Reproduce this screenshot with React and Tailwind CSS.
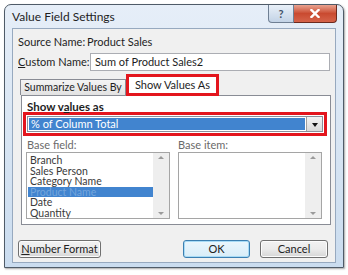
import React from "react"

const font = { fontFamily: "Lato, 'Liberation Sans', sans-serif" }

function ScrollBar() {
  return (
    <div className="flex h-full w-[16px] flex-col items-center justify-between bg-[#eeeeee] py-[3px]">
      <span className="h-0 w-0 border-x-[3px] border-b-[3px] border-x-transparent border-b-[#9a9a9a]" />
      <span className="h-0 w-0 border-x-[3px] border-t-[3px] border-x-transparent border-t-[#9a9a9a]" />
    </div>
  )
}

function ListBox({ items, selected }) {
  return (
    <div className="flex h-[67px] w-[144px] border border-[#a5a5a5] bg-white">
      <div className="flex-1 pl-[1px] pt-[2px]">
        {items.map((item) => (
          <div
            key={item}
            className={`h-[10.5px] whitespace-nowrap pl-[2px] text-[10.5px] leading-[10.5px] ${
              item === selected ? "bg-[#4184cf] text-[#75a6dc]" : "text-[#3a3a3a]"
            }`}
          >
            {item}
          </div>
        ))}
      </div>
      <ScrollBar />
    </div>
  )
}

function Button({ children, isDefault, className = "" }) {
  return (
    <div
      className={`flex h-[18px] items-center justify-center whitespace-nowrap rounded-[3px] border text-[11px] text-[#222] ${
        isDefault
          ? "border-[#3c7fb1] bg-gradient-to-b from-[#eaf6fd] to-[#d9edf8] shadow-[inset_0_0_0_1px_#a8dbf6]"
          : "border-[#707070] bg-gradient-to-b from-[#f2f2f2] via-[#ebebeb] to-[#d6d6d6] shadow-[inset_0_0_0_1px_#fcfcfc]"
      } ${className}`}
    >
      {children}
    </div>
  )
}

export default function App() {
  return (
    <div className="h-[275px] w-[348px] overflow-hidden bg-white pt-[4px] pl-[4px]" style={font}>
      <div className="h-[264px] w-[340px] rounded-t-[7px] border border-[#4f5b68] bg-gradient-to-b from-[#e6eef8] via-[#d8e5f3] to-[#cadcef] shadow-[1px_1px_2px_rgba(0,0,0,0.35)]">
        {/* title bar */}
        <div className="flex h-[23px] items-start justify-between">
          <div className="whitespace-nowrap pl-[7px] pt-[5px] text-[12px] leading-[14px] text-[#1e1e1e]">
            Value Field Settings
          </div>
          <div className="mr-[6px] flex">
            <div className="flex h-[18px] w-[26px] items-center justify-center rounded-bl-[4px] border border-t-0 border-[#6f7f93] bg-gradient-to-b from-[#e9f0f8] to-[#c3d3e6] text-[11px] font-bold leading-none text-[#3f4f66]">
              ?
            </div>
            <div className="flex h-[18px] w-[43px] items-center justify-center rounded-br-[4px] border border-l-0 border-t-0 border-[#6b2a1f] bg-gradient-to-b from-[#e9a28f] via-[#c94a30] to-[#d5634a]">
              <svg width="10" height="9" viewBox="0 0 10 9">
                <path d="M1.5 1 L8.5 8 M8.5 1 L1.5 8" stroke="#ffffff" strokeWidth="2.4" strokeLinecap="square" />
              </svg>
            </div>
          </div>
        </div>

        {/* client area */}
        <div className="mx-[7px] h-[235px] border border-[#97a9bf] bg-[#f0f0f0] text-[11px] text-[#1e1e1e]">
          <div className="flex whitespace-nowrap pl-[5px] pt-[6px] leading-[14px]">
            <span className="w-[69px]">Source Name:</span>
            <span>Product Sales</span>
          </div>

          <div className="mt-[4px] flex h-[18px] items-center whitespace-nowrap pl-[5px]">
            <span className="w-[72px]">
              <span className="underline">C</span>ustom Name:
            </span>
            <div className="flex h-[18px] w-[240px] items-center border border-[#abadb3] bg-white pl-[4px]">
              Sum of Product Sales2
            </div>
          </div>

          {/* tabs */}
          <div className="ml-[8px] mt-[3px] w-[310px]">
            <div className="flex h-[21px] items-end whitespace-nowrap">
              <div className="ml-[-1px] flex h-[16px] w-[106px] items-center justify-center border border-b-0 border-[#898c95] bg-gradient-to-b from-[#f4f4f4] to-[#e2e2e2] text-[10.5px]">
                Summarize Values By
              </div>
              <div className="relative z-10 mb-[-1px] flex h-[22px] w-[93px] items-center justify-center border-[3px] border-[#e3151d] bg-white">
                Show Values As
              </div>
            </div>

            <div className="h-[130px] border border-[#898c95] bg-white">
              <div className="whitespace-nowrap pl-[5px] pt-[4px] text-[11.5px] font-bold leading-[13px]">
                Show v<span className="underline">a</span>lues as
              </div>
              <div className="ml-[1px] mt-[-1px] h-[24px] w-[304px] border-[3px] border-[#e3151d] p-[1px]">
                <div className="flex h-[16px] border border-[#8a8f9a] bg-white">
                  <div className="m-[1px] flex flex-1 items-center whitespace-nowrap bg-[#4184cf] pl-[2px] text-white">
                    % of Column Total
                  </div>
                  <div className="flex w-[16px] items-center justify-center border-l border-[#a0a0a0] bg-gradient-to-b from-[#f3f3f3] to-[#d8d8d8]">
                    <span className="mt-[1px] h-0 w-0 border-x-[3.5px] border-t-[4px] border-x-transparent border-t-[#111]" />
                  </div>
                </div>
              </div>

              <div className="mt-[3px] flex whitespace-nowrap leading-[12px] text-[#6a6a6a]">
                <span className="w-[156px] pl-[5px]">Base field:</span>
                <span>Base item:</span>
              </div>
              <div className="ml-[4px] mt-[1px] flex gap-[8px]">
                <ListBox
                  items={["Branch", "Sales Person", "Category Name", "Product Name", "Date", "Quantity"]}
                  selected="Product Name"
                />
                <ListBox items={[]} />
              </div>
            </div>
          </div>

          {/* buttons */}
          <div className="mt-[15px] flex pl-[5px]">
            <Button className="w-[83px]">
              <span>
                <span className="underline">N</span>umber Format
              </span>
            </Button>
            <Button isDefault className="ml-[82px] w-[67px]">
              OK
            </Button>
            <Button className="ml-[10px] w-[68px]">Cancel</Button>
          </div>
        </div>
      </div>
    </div>
  )
}
